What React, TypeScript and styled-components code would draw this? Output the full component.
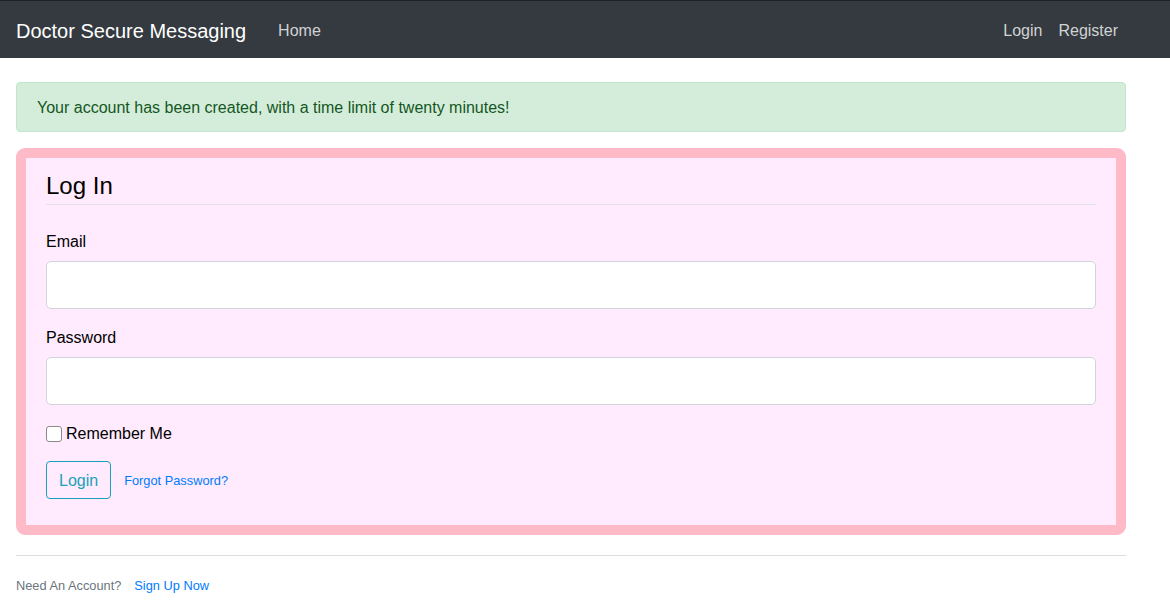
import React from "react";
import styled, { createGlobalStyle } from "styled-components";

const GlobalStyle = createGlobalStyle`
  * { box-sizing: border-box; }
  html, body { margin: 0; padding: 0; background: #fff; }
  body {
    font-family: "Liberation Sans", Arial, sans-serif;
    font-size: 16px;
    line-height: 1.5;
    color: #212529;
  }
`;

const NavBar = styled.header`
  background: #343a40;
  border-top: 1px solid #1d2024;
  height: 58px;
`;

const NavInner = styled.nav`
  width: 1110px;
  margin-left: 16px;
  height: 57px;
  padding-top: 2px;
  display: flex;
  align-items: center;
`;

const Brand = styled.a`
  color: #fff;
  font-size: 20px;
  line-height: 30px;
  text-decoration: none;
`;

const NavLinks = styled.div<{ $right?: boolean }>`
  display: flex;
  align-items: center;
  margin-left: ${(p) => (p.$right ? "auto" : "24px")};
`;

const NavLink = styled.a`
  color: rgba(255, 255, 255, 0.78);
  font-size: 16px;
  padding: 8px;
  text-decoration: none;
`;

const Main = styled.main`
  width: 1110px;
  margin-left: 16px;
  padding-top: 24px;
`;

const Alert = styled.div`
  background: #d4edda;
  border: 1px solid #c3e6cb;
  color: #155724;
  border-radius: 4px;
  padding: 13px 20px 11px;
  margin-bottom: 16px;
`;

const Card = styled.section`
  background: #ffebfd;
  border: 10px solid #ffbac8;
  border-radius: 9px;
  padding: 10px 20px 10px;
`;

const Legend = styled.h2`
  margin: 0 0 24px;
  font-size: 24px;
  font-weight: 400;
  line-height: 36px;
  color: #000;
  border-bottom: 1px solid #dde2e6;
`;

const FormGroup = styled.div`
  margin-bottom: 16px;
`;

const Label = styled.label`
  display: block;
  color: #000;
  padding-top: 1px;
  margin-bottom: 7px;
`;

const Input = styled.input`
  display: block;
  width: 100%;
  height: 48px;
  padding: 8px 16px;
  font-size: 20px;
  font-family: inherit;
  border: 1px solid #ced4da;
  border-radius: 5px;
  background: #fff;
  outline: none;
`;

const CheckRow = styled.label`
  display: flex;
  align-items: center;
  color: #000;
  padding-top: 1px;
  margin-bottom: 15px;
`;

const Check = styled.input`
  appearance: none;
  width: 16px;
  height: 16px;
  margin: 0 4px 0 0;
  border: 1px solid #8a8a8a;
  border-radius: 3px;
  background: #fff;
`;

const ActionRow = styled.div`
  display: flex;
  align-items: center;
  margin-bottom: 16px;
`;

const OutlineButton = styled.button`
  font-family: inherit;
  font-size: 16px;
  line-height: 24px;
  padding: 7px 12px 5px;
  color: #17a2b8;
  background: transparent;
  border: 1px solid #17a2b8;
  border-radius: 4px;
`;

const SmallLink = styled.a`
  font-size: 12.8px;
  color: #007bff;
  text-decoration: none;
  margin-left: 13px;
  padding-top: 2px;
`;

const Footer = styled.div`
  margin-top: 20px;
  border-top: 1px solid #dddddd;
  padding-top: 20px;
  display: flex;
  align-items: center;
`;

const Muted = styled.small`
  font-size: 12.8px;
  color: #6c757d;
`;

const FooterLink = styled.a`
  font-size: 12.8px;
  color: #007bff;
  text-decoration: none;
  margin-left: 13px;
`;

export default function App() {
  return (
    <>
      <GlobalStyle />
      <NavBar>
        <NavInner>
          <Brand href="#">Doctor Secure Messaging</Brand>
          <NavLinks>
            <NavLink href="#">Home</NavLink>
          </NavLinks>
          <NavLinks $right>
            <NavLink href="#">Login</NavLink>
            <NavLink href="#">Register</NavLink>
          </NavLinks>
        </NavInner>
      </NavBar>
      <Main>
        <Alert>Your account has been created, with a time limit of twenty minutes!</Alert>
        <Card>
          <Legend>Log In</Legend>
          <FormGroup>
            <Label>Email</Label>
            <Input type="email" />
          </FormGroup>
          <FormGroup>
            <Label>Password</Label>
            <Input type="password" />
          </FormGroup>
          <CheckRow>
            <Check type="checkbox" />
            Remember Me
          </CheckRow>
          <ActionRow>
            <OutlineButton>Login</OutlineButton>
            <SmallLink href="#">Forgot Password?</SmallLink>
          </ActionRow>
        </Card>
        <Footer>
          <Muted>Need An Account?</Muted>
          <FooterLink href="#">Sign Up Now</FooterLink>
        </Footer>
      </Main>
    </>
  );
}
